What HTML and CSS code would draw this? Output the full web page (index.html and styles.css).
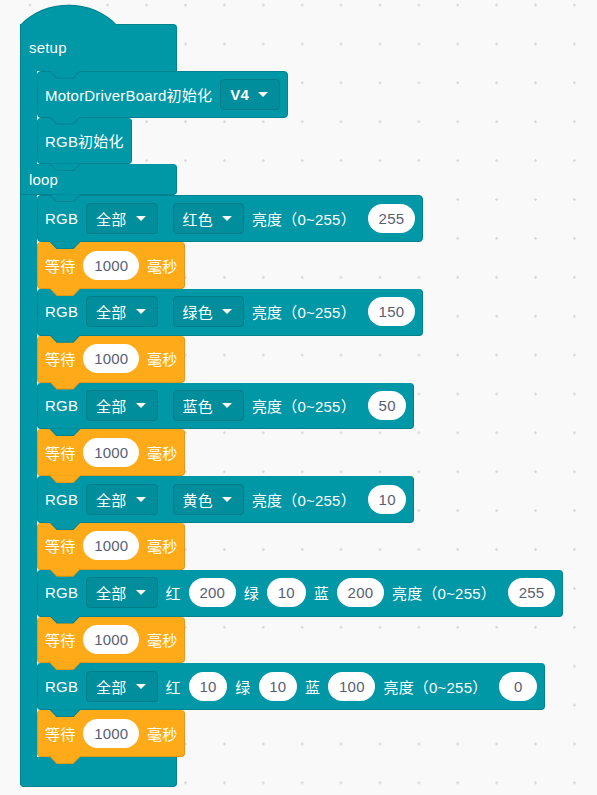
FILE: index.html
```html
<!DOCTYPE html>
<html lang="zh-CN">
<head>
  <meta charset="UTF-8" />
  <meta name="viewport" content="width=device-width, initial-scale=1.0"/>
  <title>RGB 灯测试</title>
  <link rel="stylesheet" href="styles.css">
</head>
<body>
  <div class="workspace">
    <div class="c-block">
      <div class="c-head">setup</div>
      <div class="c-body">
        <div class="c-arm"></div>
        <div class="stack">
          <div class="block teal">
            <span>MotorDriverBoard初始化</span>
            <div class="drop"><b>V4</b><i class="caret"></i></div>
          </div>
          <div class="block teal"><span>RGB初始化</span></div>
        </div>
      </div>

      <div class="c-mid">loop</div>
      <div class="c-body">
        <div class="c-arm"></div>
        <div class="stack">
          <div class="block teal">
            <span>RGB</span>
            <div class="drop">全部<i class="caret"></i></div>
            <div class="drop spaced">红色<i class="caret"></i></div>
            <span class="range">亮度（0~255）</span>
            <span class="num">255</span>
          </div>
          <div class="block orange">
            <span>等待</span><span class="num">1000</span><span>毫秒</span>
          </div>

          <div class="block teal">
            <span>RGB</span>
            <div class="drop">全部<i class="caret"></i></div>
            <div class="drop spaced">绿色<i class="caret"></i></div>
            <span class="range">亮度（0~255）</span>
            <span class="num">150</span>
          </div>
          <div class="block orange">
            <span>等待</span><span class="num">1000</span><span>毫秒</span>
          </div>

          <div class="block teal">
            <span>RGB</span>
            <div class="drop">全部<i class="caret"></i></div>
            <div class="drop spaced">蓝色<i class="caret"></i></div>
            <span class="range">亮度（0~255）</span>
            <span class="num">50</span>
          </div>
          <div class="block orange">
            <span>等待</span><span class="num">1000</span><span>毫秒</span>
          </div>

          <div class="block teal">
            <span>RGB</span>
            <div class="drop">全部<i class="caret"></i></div>
            <div class="drop spaced">黄色<i class="caret"></i></div>
            <span class="range">亮度（0~255）</span>
            <span class="num">10</span>
          </div>
          <div class="block orange">
            <span>等待</span><span class="num">1000</span><span>毫秒</span>
          </div>

          <div class="block teal">
            <span>RGB</span>
            <div class="drop">全部<i class="caret"></i></div>
            <span>红</span><span class="num">200</span>
            <span>绿</span><span class="num">10</span>
            <span>蓝</span><span class="num">200</span>
            <span class="range">亮度（0~255）</span>
            <span class="num">255</span>
          </div>
          <div class="block orange">
            <span>等待</span><span class="num">1000</span><span>毫秒</span>
          </div>

          <div class="block teal">
            <span>RGB</span>
            <div class="drop">全部<i class="caret"></i></div>
            <span>红</span><span class="num">10</span>
            <span>绿</span><span class="num">10</span>
            <span>蓝</span><span class="num">100</span>
            <span class="range">亮度（0~255）</span>
            <span class="num">0</span>
          </div>
          <div class="block orange">
            <span>等待</span><span class="num">1000</span><span>毫秒</span>
          </div>
        </div>
      </div>
      <div class="c-foot"></div>
    </div>
  </div>
</body>
</html>
```

FILE: styles.css
```css
* {
  box-sizing: border-box;
}
body {
  margin: 0;
  min-height: 795px;
  background-color: #f9f9f9;
  background-image: radial-gradient(circle, #d9d9d9 0 1px, transparent 1.5px);
  background-size: 38.9px 38.9px;
  background-position: 10.5px 24.5px;
  font-family: "Liberation Sans", "Noto Sans CJK SC", sans-serif;
  font-size: 15px;
  letter-spacing: 0.2px;
  color: #fff;
}
.workspace {
  padding: 24px 0 0 20px;
}

/* colours for blocks and their tabs */
.teal, .c-head, .c-mid {
  --fill: #0097a7;
  --line: #00828f;
}
.orange {
  --fill: #ffab19;
  --line: #e2961a;
}

/* setup / loop container */
.c-block {
  position: relative;
}
/* hat on top of "setup": outline layer, then fill */
.c-block::before, .c-block::after {
  content: "";
  position: absolute;
  z-index: 1;
  left: 0;
  top: -25px;
  width: 97px;
  height: 26px;
}
.c-block::before {
  background: #00828f;
  clip-path: path("M0 26 C24 -1 73 -1 97 26 Z");
}
.c-block::after {
  background: #0097a7;
  clip-path: path("M1 26 C25 0.5 72 0.5 96 26 Z");
}
.c-head, .c-mid, .c-foot {
  width: 157px;
  background: #0097a7;
  border: 1px solid #00828f;
}
.c-head, .c-mid {
  position: relative;
  display: flex;
  align-items: center;
  padding-left: 8px;
}
.c-head {
  height: 46.8px;
  border-bottom: 0;
  border-radius: 0 4px 0 0;
}
.c-mid {
  height: 31px;
  border-top: 0;
  border-radius: 0 4px 4px 0;
}
.c-foot {
  height: 30.5px;
  border-top: 0;
  border-radius: 0 0 4px 4px;
}
.c-body {
  display: flex;
}
.c-arm {
  width: 17px;
  flex: none;
  background: #0097a7;
  border-left: 1px solid #00828f;
}
.stack {
  display: flex;
  flex-direction: column;
  align-items: flex-start;
}

/* statement blocks */
.block {
  position: relative;
  display: flex;
  align-items: center;
  gap: 8px;
  height: 46.8px;
  padding: 0 7px;
  background: var(--fill);
  border: 1px solid var(--line);
  border-radius: 4px;
  white-space: nowrap;
}
.block + .block {
  border-top: 0;
}

/* the tab hanging under each block */
.block::before, .c-head::before, .c-mid::before {
  content: "";
  position: absolute;
  z-index: 1;
  top: 100%;
  left: 11px;
  width: 32px;
  height: 8px;
  background: var(--line);
  clip-path: polygon(0 0, 100% 0, 76% 100%, 24% 100%);
}
.block::after, .c-head::after, .c-mid::after {
  content: "";
  position: absolute;
  z-index: 1;
  top: 100%;
  left: 12px;
  width: 30px;
  height: 7px;
  background: var(--fill);
  clip-path: polygon(0 0, 100% 0, 76% 100%, 24% 100%);
}
.c-head::before, .c-mid::before {
  left: 28px;
}
.c-head::after, .c-mid::after {
  left: 29px;
}

/* dropdown field */
.drop {
  display: flex;
  align-items: center;
  gap: 9px;
  height: 31px;
  padding: 0 11px 0 9px;
  background: #008d9c;
  border: 1px solid #007b88;
  border-radius: 4px;
}
.drop b {
  font-weight: bold;
}
.drop.spaced {
  margin-left: 7px;
}
.caret {
  width: 0;
  height: 0;
  border-left: 5px solid transparent;
  border-right: 5px solid transparent;
  border-top: 5px solid #fff;
}

.range {
  margin-right: 4px;
}

/* round number input */
.num {
  display: flex;
  align-items: center;
  justify-content: center;
  min-width: 38px;
  height: 29px;
  padding: 0 10.75px;
  background: #fff;
  color: #575e75;
  border-radius: 15px;
}
```
